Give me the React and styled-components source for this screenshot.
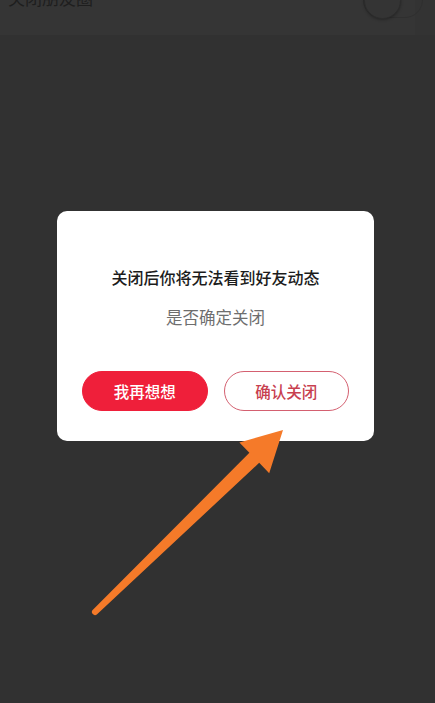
import styled, { createGlobalStyle } from "styled-components";

const GlobalStyle = createGlobalStyle`
  * { box-sizing: border-box; }
  html, body {
    margin: 0;
    padding: 0;
    background: #313131;
    font-family: "Noto Sans CJK SC", "Noto Sans", sans-serif;
  }
`;

const Page = styled.div`
  position: relative;
  width: 435px;
  height: 703px;
  overflow: hidden;
  background: #313131;
  display: flex;
  flex-direction: column;
`;

const SettingRow = styled.div`
  height: 35px;
  padding: 0 12px 0 8px;
  background: linear-gradient(to right, #353535 0, #353535 415px, #333333 415px);
  display: flex;
  justify-content: space-between;
  align-items: flex-start;
  overflow: hidden;
`;

const RowLabel = styled.span`
  margin-top: -12px;
  font-size: 17px;
  line-height: 20px;
  color: #1e1e1e;
`;

const Toggle = styled.span`
  width: 60px;
  height: 36px;
  margin-top: -18px;
  border-radius: 18px;
  border: 1px solid #2f2f2f;
  display: flex;
  align-items: center;
  padding: 0;
  &::before {
    content: "";
    width: 35px;
    height: 35px;
    border-radius: 50%;
    background: #343434;
    border: 1px solid #2c2c2c;
    box-shadow: 0 1px 3px rgba(0, 0, 0, 0.3);
  }
`;

const Center = styled.div`
  display: flex;
  padding: 176px 0 0 57px;
`;

const Dialog = styled.div`
  width: 317px;
  height: 230px;
  background: #ffffff;
  border-radius: 10px;
  display: flex;
  flex-direction: column;
  align-items: center;
  padding: 55px 25px 0;
`;

const Title = styled.div`
  font-size: 16px;
  font-weight: 500;
  line-height: 22px;
  color: #1c1c1c;
`;

const Subtitle = styled.div`
  margin-top: 18px;
  font-size: 16.5px;
  line-height: 22px;
  color: #6e6e6e;
`;

const Actions = styled.div`
  margin-top: 43px;
  display: flex;
  gap: 16px;
  width: 100%;
`;

const Button = styled.button`
  flex: 1;
  height: 40px;
  border-radius: 20px;
  font-family: inherit;
  font-size: 15.5px;
  font-weight: 500;
  display: flex;
  align-items: center;
  justify-content: center;
  border: 1.5px solid ${(p) => (p.$primary ? "#ef1f3a" : "#d46070")};
  background: ${(p) => (p.$primary ? "#ef1f3a" : "#ffffff")};
  color: ${(p) => (p.$primary ? "#ffffff" : "#c8404f")};
  padding: 0;
`;

const Arrow = styled.svg`
  position: absolute;
  left: 0;
  top: 0;
  pointer-events: none;
`;

export default function App() {
  return (
    <>
      <GlobalStyle />
      <Page>
        <SettingRow>
          <RowLabel>关闭朋友圈</RowLabel>
          <Toggle />
        </SettingRow>
        <Center>
          <Dialog>
            <Title>关闭后你将无法看到好友动态</Title>
            <Subtitle>是否确定关闭</Subtitle>
            <Actions>
              <Button $primary>我再想想</Button>
              <Button>确认关闭</Button>
            </Actions>
          </Dialog>
        </Center>
        <Arrow width="435" height="703" viewBox="0 0 435 703">
          <path
            d="M239.4 442.4 L283 430 L269.2 473.2 L259.2 462.8 L97.1 614.2 A3 3 0 0 1 92.9 609.8 L249.4 452.8 Z"
            fill="#f57a29"
          />
        </Arrow>
      </Page>
    </>
  );
}
